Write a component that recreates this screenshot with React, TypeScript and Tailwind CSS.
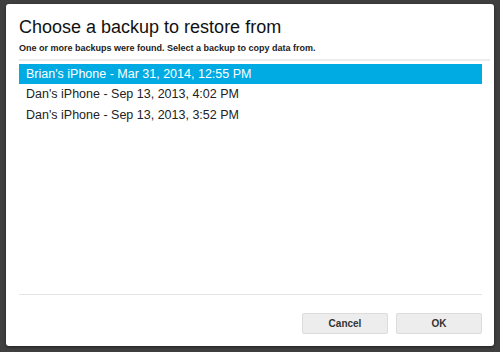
export default function App() {
  const backups = [
    "Brian's iPhone - Mar 31, 2014, 12:55 PM",
    "Dan's iPhone - Sep 13, 2013, 4:02 PM",
    "Dan's iPhone - Sep 13, 2013, 3:52 PM",
  ]
  const selected = 0

  return (
    <div className="w-[500px] h-[352px] bg-[#3f3f3f] pt-[4px] pl-[6px] overflow-hidden">
      <div className="w-[488px] h-[342px] bg-white rounded-[3px] flex flex-col pl-[13px] pr-[12px] shadow-[0_1px_3px_rgba(0,0,0,0.5)]">
        <h1 className="mt-[12px] text-[18px] leading-[22px] text-[#111] font-['Liberation_Sans',sans-serif]">
          Choose a backup to restore from
        </h1>
        <p className="mt-[4px] text-[9px] leading-[12px] font-bold text-[#222] font-['Liberation_Sans',sans-serif]">
          One or more backups were found. Select a backup to copy data from.
        </p>
        <div className="mt-[5px] h-[2px] bg-[#ececec] mr-[-8px]" />
        <ul className="mt-[3px] flex flex-col">
          {backups.map((b, i) => (
            <li
              key={b}
              className={
                i === selected
                  ? 'h-[20px] pl-[7px] bg-[#00abe3] text-white text-[12.5px] leading-[20px] font-["Liberation_Sans",sans-serif]'
                  : 'h-[20.5px] pl-[7px] text-[#222] text-[12.5px] leading-[21px] font-["Liberation_Sans",sans-serif]'
              }
            >
              {b}
            </li>
          ))}
        </ul>
        <div className="flex-1" />
        <div className="h-px bg-[#e4e4e4]" />
        <div className="flex justify-end gap-[8px] mt-[18px] mb-[12px]">
          <button className="w-[86px] h-[21px] rounded-[2px] bg-[#ededed] border border-[#dcdcdc] text-[10px] font-bold text-[#333] font-['Liberation_Sans',sans-serif]">
            Cancel
          </button>
          <button className="w-[86px] h-[21px] rounded-[2px] bg-[#ededed] border border-[#dcdcdc] text-[10px] font-bold text-[#333] font-['Liberation_Sans',sans-serif]">
            OK
          </button>
        </div>
      </div>
    </div>
  )
}
